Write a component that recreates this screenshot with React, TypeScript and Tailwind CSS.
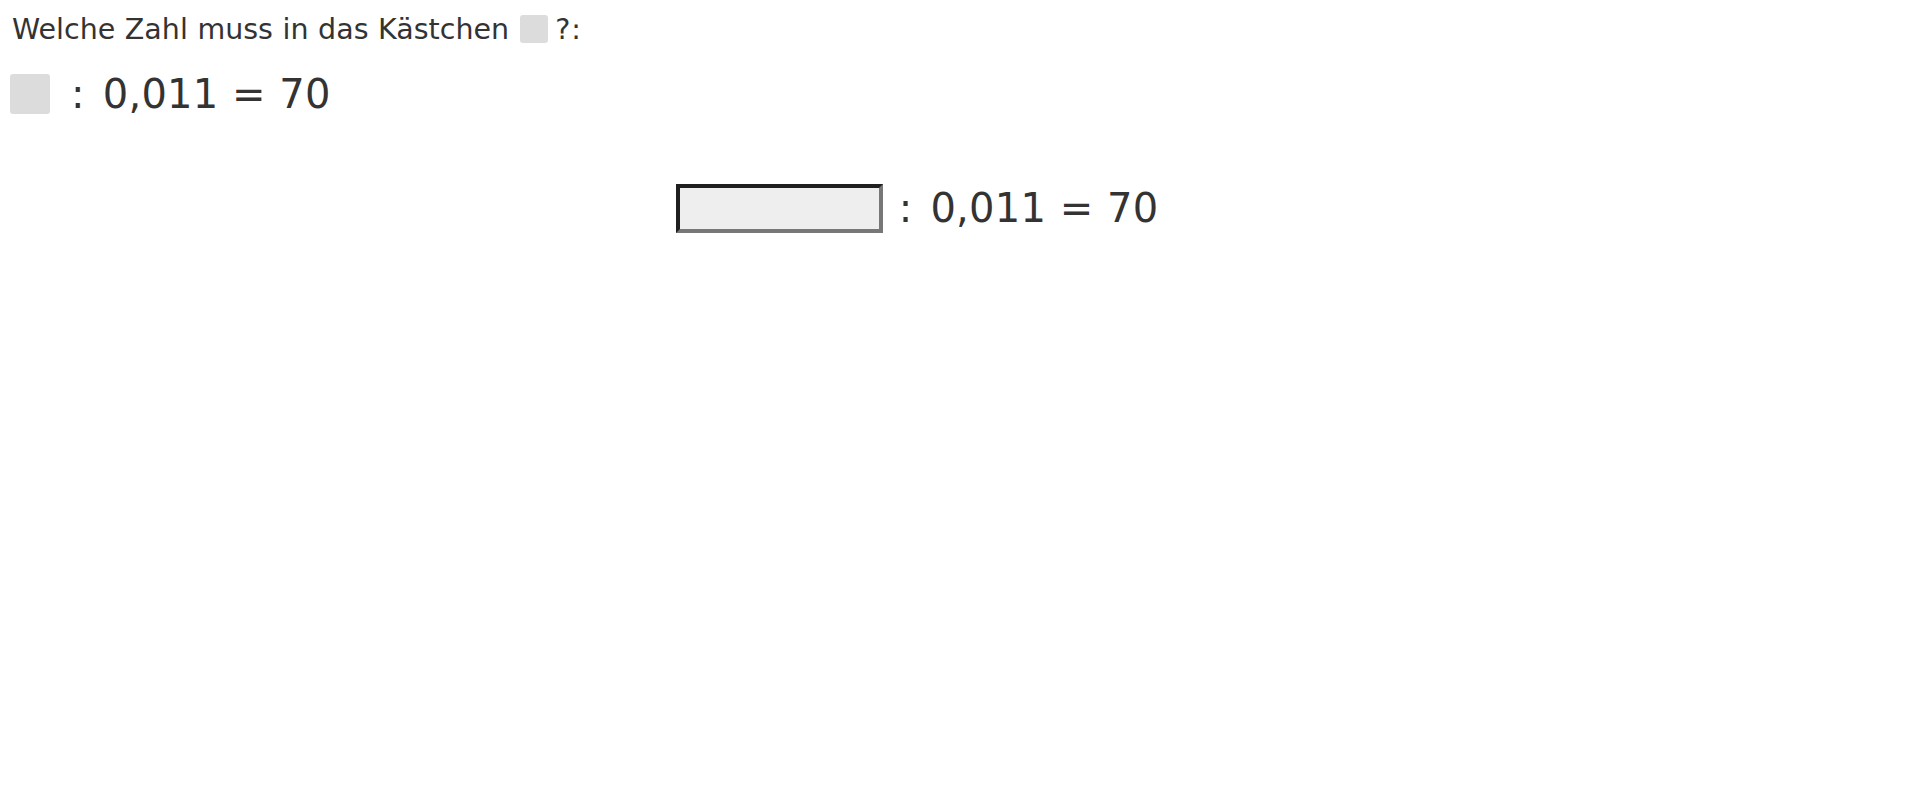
export default function App() {
  return (
    <div className="min-h-screen bg-white pt-[13px] pl-[10px] text-[#333] font-['DejaVu_Sans',Verdana,sans-serif] [word-spacing:0.034em]">
      {/* Frage */}
      <div className="flex items-start h-[34px] pl-[2px] text-[28.5px] leading-[34px]">
        <span>Welche Zahl muss in das Kästchen</span>
        <span className="ml-[11px] mt-[2px] w-[28px] h-[28px] rounded-[3px] bg-[#dcdcdc]" />
        <span className="ml-[7px] tracking-[1px]">?:</span>
      </div>

      {/* Aufgabe */}
      <div className="flex items-start mt-[23px] h-[48px] text-[40px] leading-[48px]">
        <span className="mt-[4px] w-[40px] h-[40px] rounded-[3px] bg-[#dcdcdc]" />
        <span className="ml-[21px] whitespace-pre tracking-[0.25px]">
          <span className="mr-[4.5px]">:</span> 0,011 = 70
        </span>
      </div>

      {/* Eingabe */}
      <div className="flex items-start justify-center mt-[66px] pr-[96px] text-[40px] leading-[48px]">
        <input
          type="text"
          className="w-[207px] h-[49px] bg-[#eeeeee] border-4 border-t-[#1f1f1f] border-l-[#1f1f1f] border-b-[#777] border-r-[#777] outline-none px-2 text-[28px]"
        />
        <span className="ml-[16px] whitespace-pre tracking-[0.25px]">
          <span className="mr-[4.5px]">:</span> 0,011 = 70
        </span>
      </div>
    </div>
  );
}
